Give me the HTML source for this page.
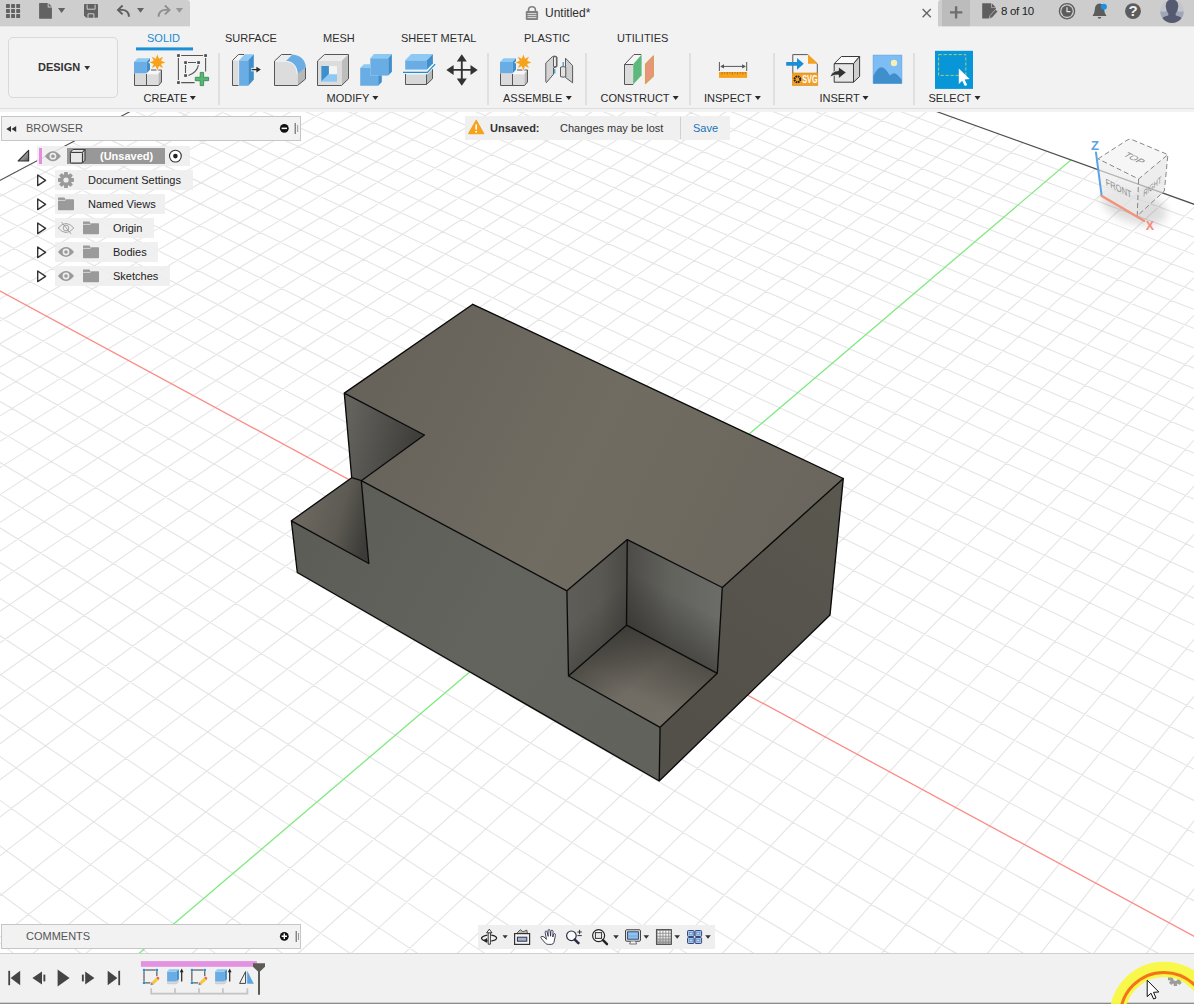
<!DOCTYPE html>
<html><head><meta charset="utf-8"><title>Fusion</title>
<style>
*{box-sizing:border-box;margin:0;padding:0}
html,body{width:1194px;height:1004px;overflow:hidden;background:#fff}
body{font-family:"Liberation Sans",sans-serif;font-size:11px;color:#333;position:relative}
.abs{position:absolute}
.t{position:absolute;white-space:nowrap;font-size:11px;line-height:12px;color:#2e2e2e}
.b{font-weight:bold}
#topbar{left:0;top:0;width:1194px;height:27px;background:#f2f2f2}
#qat{left:0;top:0;width:190px;height:26px;background:#cdcecd;border-top-right-radius:3px}
#rbar{left:938px;top:0;width:256px;height:26px;background:#cdcdcd;border-top-left-radius:3px}
#plusbox{left:942px;top:0;width:28px;height:26px;background:#bcbcbc}
#toolbar{left:0;top:26px;width:1194px;height:86px;background:#f2f2f2}
#tbline{left:0;top:108px;width:1194px;height:1px;background:#dedede}
#design{left:8px;top:37px;width:110px;height:61px;border:1px solid #d8d8d8;border-radius:5px;background:#f3f3f3}
.sep{position:absolute;top:53px;width:2px;height:52px;background:#dfdfdf}
.tab{position:absolute;top:32px;font-size:11px;line-height:12px;color:#2e2e2e;white-space:nowrap}
.lbl{position:absolute;top:92px;font-size:11px;line-height:12px;color:#2a2a2a;white-space:nowrap}
.panel{position:absolute;background:#f2f2f2;border:1px solid #c6c6c6}
.row{position:absolute;height:20px;background:rgba(238,238,238,0.88)}
#timeline{left:0;top:953px;width:1194px;height:51px;background:#f1f1f1;border-top:1px solid #cfcfcf;border-bottom:1px solid #8c8c8c;box-shadow:inset 0 -1px 0 #d0d0d0}
#navbar{left:478px;top:925px;width:237px;height:24px;background:#efefef}
#notice{left:465px;top:116px;width:265px;height:24px;background:#f0f0f0}
</style></head><body>
<svg id="cv" width="1194" height="1004" viewBox="0 0 1194 1004" style="position:absolute;left:0;top:0">
<defs>
<linearGradient id="gTop" gradientUnits="userSpaceOnUse" x1="360" y1="360" x2="800" y2="580"><stop offset="0" stop-color="#66625a"/><stop offset="0.5" stop-color="#706c62"/><stop offset="1" stop-color="#6a665d"/></linearGradient>
<linearGradient id="gFront" gradientUnits="userSpaceOnUse" x1="300" y1="540" x2="660" y2="740"><stop offset="0" stop-color="#5d5d57"/><stop offset="0.5" stop-color="#64645f"/><stop offset="1" stop-color="#62625d"/></linearGradient>
<linearGradient id="gRight" gradientUnits="userSpaceOnUse" x1="690" y1="720" x2="840" y2="500"><stop offset="0" stop-color="#53504a"/><stop offset="1" stop-color="#5a574f"/></linearGradient>
<linearGradient id="gLW" gradientUnits="userSpaceOnUse" x1="346" y1="430" x2="415" y2="445"><stop offset="0" stop-color="#63625d"/><stop offset="1" stop-color="#3f3e3a"/></linearGradient>
<linearGradient id="gStep" gradientUnits="userSpaceOnUse" x1="300" y1="515" x2="368" y2="535"><stop offset="0" stop-color="#6c6860"/><stop offset="0.55" stop-color="#5d5a53"/><stop offset="1" stop-color="#3c3b37"/></linearGradient>
<linearGradient id="gNL" gradientUnits="userSpaceOnUse" x1="567" y1="630" x2="628" y2="630"><stop offset="0" stop-color="#5f5d57"/><stop offset="0.55" stop-color="#5a5852"/><stop offset="1" stop-color="#4a4945"/></linearGradient>
<linearGradient id="oNLb" gradientUnits="userSpaceOnUse" x1="626.5" y1="625.2" x2="603.4" y2="598.9"><stop offset="0" stop-color="#2a2926" stop-opacity="0.32"/><stop offset="1" stop-color="#2a2926" stop-opacity="0"/></linearGradient>
<linearGradient id="gNB" gradientUnits="userSpaceOnUse" x1="627" y1="600" x2="722" y2="600"><stop offset="0" stop-color="#4c4b47"/><stop offset="0.45" stop-color="#62625d"/><stop offset="1" stop-color="#6c6c68"/></linearGradient>
<linearGradient id="oNBb" gradientUnits="userSpaceOnUse" x1="626.5" y1="625.2" x2="650" y2="581"><stop offset="0" stop-color="#2a2926" stop-opacity="0.5"/><stop offset="1" stop-color="#2a2926" stop-opacity="0"/></linearGradient>
<linearGradient id="gNF" gradientUnits="userSpaceOnUse" x1="640" y1="625" x2="655" y2="725"><stop offset="0" stop-color="#6a665e"/><stop offset="1" stop-color="#736f66"/></linearGradient>
<linearGradient id="oNF1" gradientUnits="userSpaceOnUse" x1="626.5" y1="625.2" x2="600" y2="675.3"><stop offset="0" stop-color="#2a2926" stop-opacity="0.45"/><stop offset="1" stop-color="#2a2926" stop-opacity="0"/></linearGradient>
<linearGradient id="oNF2" gradientUnits="userSpaceOnUse" x1="626.5" y1="625.2" x2="659.5" y2="662.8"><stop offset="0" stop-color="#2a2926" stop-opacity="0.45"/><stop offset="1" stop-color="#2a2926" stop-opacity="0"/></linearGradient>
<clipPath id="gridclip"><polygon points="0,180.4 456.7,-61.2 1194,204.3 1194,1004 0,1004"/></clipPath>
</defs>
<rect width="1194" height="1004" fill="#fff"/>
<g clip-path="url(#gridclip)"><path d="M-1812 -100L-653 1100M-1775.7 -100L-581.3 1100M-1739.5 -100L-509.7 1100M-1703.2 -100L-438 1100M-1666.9 -100L-366.3 1100M-1630.6 -100L-294.7 1100M-1594.4 -100L-223 1100M-1558.1 -100L-151.3 1100M-1521.8 -100L-79.7 1100M-1485.5 -100L-8 1100M-1449.3 -100L63.7 1100M-1413 -100L135.3 1100M-1376.7 -100L207 1100M-1340.4 -100L278.7 1100M-1304.2 -100L350.3 1100M-1267.9 -100L422 1100M-1231.6 -100L493.6 1100M-1195.3 -100L565.3 1100M-1159.1 -100L637 1100M-1122.8 -100L708.6 1100M-1086.5 -100L780.3 1100M-1050.2 -100L852 1100M-1014 -100L923.6 1100M-977.7 -100L995.3 1100M-941.4 -100L1067 1100M-905.1 -100L1138.6 1100M-868.9 -100L1210.3 1100M-832.6 -100L1282 1100M-796.3 -100L1353.6 1100M-760 -100L1425.3 1100M-687.5 -100L1568.6 1100M-651.2 -100L1640.3 1100M-614.9 -100L1712 1100M-578.7 -100L1783.6 1100M-542.4 -100L1855.3 1100M-506.1 -100L1927 1100M-469.8 -100L1998.6 1100M-433.6 -100L2070.3 1100M-397.3 -100L2141.9 1100M-361 -100L2213.6 1100M-324.7 -100L2285.3 1100M-288.5 -100L2356.9 1100M-252.2 -100L2428.6 1100M-215.9 -100L2500.3 1100M-179.6 -100L2571.9 1100M-143.4 -100L2643.6 1100M-107.1 -100L2715.3 1100M-70.8 -100L2786.9 1100M-34.5 -100L2858.6 1100M1.7 -100L2930.3 1100M38 -100L3001.9 1100M74.3 -100L3073.6 1100M110.6 -100L3145.3 1100M146.8 -100L3216.9 1100M183.1 -100L3288.6 1100M219.4 -100L3360.3 1100M255.7 -100L3431.9 1100M291.9 -100L3503.6 1100M328.2 -100L3575.2 1100M2233.3 -100L1659.9 1100M2204.7 -100L1603.5 1100M2176.2 -100L1547 1100M2147.6 -100L1490.6 1100M2119 -100L1434.2 1100M2090.5 -100L1377.7 1100M2061.9 -100L1321.3 1100M2033.3 -100L1264.9 1100M2004.8 -100L1208.4 1100M1976.2 -100L1152 1100M1947.6 -100L1095.6 1100M1919.1 -100L1039.1 1100M1890.5 -100L982.7 1100M1861.9 -100L926.3 1100M1833.4 -100L869.8 1100M1804.8 -100L813.4 1100M1776.2 -100L757 1100M1747.7 -100L700.5 1100M1719.1 -100L644.1 1100M1690.5 -100L587.7 1100M1662 -100L531.2 1100M1633.4 -100L474.8 1100M1604.8 -100L418.4 1100M1576.3 -100L361.9 1100M1547.7 -100L305.5 1100M1519.1 -100L249.1 1100M1490.6 -100L192.6 1100M1462 -100L136.2 1100M1433.5 -100L79.7 1100M1404.9 -100L23.3 1100M1347.8 -100L-89.6 1100M1319.2 -100L-146 1100M1290.6 -100L-202.4 1100M1262.1 -100L-258.9 1100M1233.5 -100L-315.3 1100M1204.9 -100L-371.7 1100M1176.4 -100L-428.2 1100M1147.8 -100L-484.6 1100M1119.2 -100L-541 1100M1090.7 -100L-597.5 1100M1062.1 -100L-653.9 1100M1033.5 -100L-710.3 1100M1005 -100L-766.8 1100M976.4 -100L-823.2 1100M947.8 -100L-879.6 1100M919.3 -100L-936.1 1100M890.7 -100L-992.5 1100M862.1 -100L-1048.9 1100M833.6 -100L-1105.4 1100M805 -100L-1161.8 1100M776.4 -100L-1218.2 1100M747.9 -100L-1274.7 1100M719.3 -100L-1331.1 1100M690.7 -100L-1387.5 1100M662.2 -100L-1444 1100M633.6 -100L-1500.4 1100M605.1 -100L-1556.9 1100M576.5 -100L-1613.3 1100M547.9 -100L-1669.7 1100" stroke="#000" stroke-opacity="0.1" stroke-width="1.15" fill="none"/><line x1="-723.8" y1="-100" x2="1497" y2="1100" stroke="#fb8c86" stroke-width="1.3" /><line x1="1376.3" y1="-100" x2="-33.1" y2="1100" stroke="#80e980" stroke-width="1.3" /></g>
<line x1="456.7" y1="-61.4" x2="1400" y2="278.5" stroke="#505050" stroke-width="1.25" /><line x1="456.7" y1="-61.4" x2="-100" y2="233.3" stroke="#505050" stroke-width="1.25" />
<g><polygon points="472.8,304.3 843.3,478.5 722.3,587.5 627.3,539.6 566.9,590.8 361.3,480.7 424.4,435 344.3,393.1" fill="url(#gTop)" />
<polygon points="344.3,393.1 424.4,435 361.3,480.7 351.7,477.7" fill="url(#gLW)" />
<polygon points="291.4,520.8 351.7,477.7 361.3,480.7 368.8,563.5" fill="url(#gStep)" />
<polygon points="291.4,520.8 368.8,563.5 361.3,480.7 566.9,590.8 568.5,676 660.1,727.3 659.2,781 297.3,572.5" fill="url(#gFront)" />
<polygon points="566.9,590.8 627.3,539.6 626.5,625.2 568.5,676" fill="url(#gNL)" />
<polygon points="566.9,590.8 627.3,539.6 626.5,625.2 568.5,676" fill="url(#oNLb)" />
<polygon points="627.3,539.6 722.3,587.5 717.3,673.3 626.5,625.2" fill="url(#gNB)" />
<polygon points="627.3,539.6 722.3,587.5 717.3,673.3 626.5,625.2" fill="url(#oNBb)" />
<polygon points="626.5,625.2 717.3,673.3 660.1,727.3 568.5,676" fill="url(#gNF)" />
<polygon points="626.5,625.2 717.3,673.3 660.1,727.3 568.5,676" fill="url(#oNF1)" />
<polygon points="626.5,625.2 717.3,673.3 660.1,727.3 568.5,676" fill="url(#oNF2)" />
<polygon points="722.3,587.5 843.3,478.5 830,615 659.2,781 660.1,727.3 717.3,673.3" fill="url(#gRight)" />
<path d="M472.8 304.3L843.3 478.5M472.8 304.3L344.3 393.1M344.3 393.1L424.4 435M424.4 435L361.3 480.7M361.3 480.7L566.9 590.8M566.9 590.8L627.3 539.6M627.3 539.6L722.3 587.5M722.3 587.5L843.3 478.5M843.3 478.5L830 615M830 615L659.2 781M659.2 781L297.3 572.5M297.3 572.5L291.4 520.8M291.4 520.8L368.8 563.5M291.4 520.8L351.7 477.7M344.3 393.1L351.7 477.7M361.3 480.7L368.8 563.5M566.9 590.8L568.5 676M627.3 539.6L626.5 625.2M722.3 587.5L717.3 673.3M626.5 625.2L568.5 676M626.5 625.2L717.3 673.3M568.5 676L660.1 727.3M717.3 673.3L660.1 727.3M660.1 727.3L659.2 781M351.7 477.7L361.3 480.7" stroke="#0a0a0a" stroke-width="1.35" stroke-linecap="round" fill="none"/></g>
<defs>
<filter id="blur4" x="-50%" y="-50%" width="200%" height="200%"><feGaussianBlur stdDeviation="4"/></filter>
</defs>
<g id="viewcube">
 <ellipse cx="1134" cy="206" rx="34" ry="17" fill="#000" opacity="0.13" filter="url(#blur4)" transform="rotate(18 1134 206)"/>
 <polygon points="1098.1,158.8 1129.5,138.6 1167.9,154.6 1138.6,179" fill="#f1f1f1" fill-opacity="0.66"/>
 <polygon points="1098.1,158.8 1138.6,179 1137.2,216 1101.6,195.1" fill="#ebebeb" fill-opacity="0.66"/>
 <polygon points="1138.6,179 1167.9,154.6 1164.4,190.9 1137.2,216" fill="#e3e3e3" fill-opacity="0.66"/>
 <path d="M1098.1 158.8 L1127 140.2 Q1129.5 138.6 1132 139.6 L1167.9 154.6 L1138.6 179 Z M1138.6 179 L1137.2 216 L1164.4 190.9 L1167.9 154.6" fill="none" stroke="#7a7a7a" stroke-width="0.9" stroke-dasharray="5 3"/>
 <text transform="matrix(0.894,0.446,-0.842,0.541,1134.4,158.1)" font-family="Liberation Sans, sans-serif" font-size="9.5" fill="#8a8a8a" text-anchor="middle" y="3.4" textLength="20" lengthAdjust="spacingAndGlyphs">TOP</text>
 <text transform="matrix(0.894,0.446,0.096,0.995,1118.6,188.2)" font-family="Liberation Sans, sans-serif" font-size="10" fill="#8a8a8a" text-anchor="middle" y="3.6" textLength="29" lengthAdjust="spacingAndGlyphs">FRONT</text>
 <text transform="matrix(0.769,-0.640,-0.038,0.999,1152.3,186.4)" font-family="Liberation Sans, sans-serif" font-size="9.5" fill="#8a8a8a" text-anchor="middle" y="3.4" textLength="23.5" lengthAdjust="spacingAndGlyphs">RIGHT</text>
 <path d="M1096 152.6 L1101.6 195.4" stroke="#5aa3e4" stroke-width="2" stroke-linecap="round"/>
 <path d="M1101.8 196 L1144 220.8" stroke="#f3927a" stroke-width="2.4" stroke-linecap="round"/>
 <text x="1094.9" y="150.4" font-family="Liberation Sans, sans-serif" font-size="13" font-weight="bold" fill="#5aa3e4" text-anchor="middle">Z</text>
 <text x="1149.8" y="229.6" font-family="Liberation Sans, sans-serif" font-size="12.5" font-weight="bold" fill="#f58a7c" text-anchor="middle">X</text>
</g>

</svg>

<div class="abs" id="topbar"></div>
<div class="abs" id="qat"></div>
<div class="abs" id="rbar"></div>
<div class="abs" id="plusbox"></div>
<div class="abs" id="toolbar"></div>
<div class="abs" id="tbline"></div>
<div class="abs" id="design"></div>
<div class="abs" style="left:0;top:26px;width:190px;height:1px;background:#e4e5e4"></div>
<div class="abs" style="left:938px;top:26px;width:256px;height:1px;background:#e4e4e4"></div>
<div class="abs" style="left:942px;top:26px;width:28px;height:1px;background:#dedede"></div>

<div class="sep" style="left:218px"></div>
<div class="sep" style="left:487px"></div>
<div class="sep" style="left:585px"></div>
<div class="sep" style="left:689px"></div>
<div class="sep" style="left:773px"></div>
<div class="sep" style="left:913px"></div>

<div class="t b" style="left:38px;top:61px;color:#333">DESIGN</div>
<div class="t" style="left:545px;top:7px;font-size:12px;line-height:13px;color:#2e2e2e">Untitled*</div>
<div class="t" style="left:1001px;top:4.5px;font-size:11.5px;line-height:13px;color:#222;letter-spacing:-0.35px">8 of 10</div>

<div class="tab" style="left:147px;color:#1a8ad2">SOLID</div>
<div class="abs" style="left:135.5px;top:47px;width:57.5px;height:1px;background:#70b7e2"></div><div class="abs" style="left:135.5px;top:48px;width:57.5px;height:2px;background:#1a8fd8"></div><div class="abs" style="left:135.5px;top:50px;width:57.5px;height:1px;background:#9ccae8"></div>
<div class="tab" style="left:225px">SURFACE</div>
<div class="tab" style="left:323px">MESH</div>
<div class="tab" style="left:401px">SHEET METAL</div>
<div class="tab" style="left:524px">PLASTIC</div>
<div class="tab" style="left:617px">UTILITIES</div>

<div class="lbl" style="left:143.5px">CREATE</div>
<div class="lbl" style="left:326.5px">MODIFY</div>
<div class="lbl" style="left:503px">ASSEMBLE</div>
<div class="lbl" style="left:600.5px">CONSTRUCT</div>
<div class="lbl" style="left:704px">INSPECT</div>
<div class="lbl" style="left:819.5px">INSERT</div>
<div class="lbl" style="left:928.5px">SELECT</div>

<svg class="abs" style="left:0;top:0" width="1194" height="112" viewBox="0 0 1194 112">
<defs>
<g id="icNewComp">
 <polygon points="0,8 12.5,8 12.5,19.5 0,19.5" fill="#6aade4"/>
 <polygon points="0,8 3.6,4.2 16,4.2 12.5,8" fill="#8ec9f3"/>
 <polygon points="12.5,8 16,4.2 16,16 12.5,19.5" fill="#3f8fcc"/>
 <rect x="0.5" y="19.5" width="12" height="12" fill="#dadada"/>
 <rect x="12.5" y="19.5" width="12" height="12" fill="#dcdcdc"/>
 <polygon points="12.5,19.5 16,16 27.5,16 24.5,19.5" fill="#f6f6f6"/>
 <polygon points="24.5,19.5 27.5,16 27.5,28 24.5,31.5" fill="#b8b8b8"/>
 <path d="M12.5 19.8 H24.5" stroke="#fff" stroke-width="0.8" fill="none"/><path d="M0.5 19.5 V31.5 H24.5 L27.5 28 V16 H17 M12.5 20 V31.5" fill="none" stroke="#565656" stroke-width="1" stroke-linejoin="round"/>
 <path d="M23.4 0.4 L25 4.8 L29 2.8 L27 6.8 L31.4 8.4 L27 10 L29 14 L25 12 L23.4 16.4 L21.8 12 L17.8 14 L19.8 10 L15.4 8.4 L19.8 6.8 L17.8 2.8 L21.8 4.8 Z" fill="#f6a21d" stroke="#f4f1ea" stroke-width="1.6" stroke-linejoin="round" paint-order="stroke"/>
</g>
<path id="dd" d="M0 0 H6.2 L3.1 4 Z"/>
</defs>

<!-- quick access -->
<g fill="#626262">
 <g>
  <rect x="6" y="4" width="3.9" height="3.9" rx="0.6"/><rect x="11.1" y="4" width="3.9" height="3.9" rx="0.6"/><rect x="16.2" y="4" width="3.9" height="3.9" rx="0.6"/>
  <rect x="6" y="9.05" width="3.9" height="3.9" rx="0.6"/><rect x="11.1" y="9.05" width="3.9" height="3.9" rx="0.6"/><rect x="16.2" y="9.05" width="3.9" height="3.9" rx="0.6"/>
  <rect x="6" y="14.1" width="3.9" height="3.9" rx="0.6"/><rect x="11.1" y="14.1" width="3.9" height="3.9" rx="0.6"/><rect x="16.2" y="14.1" width="3.9" height="3.9" rx="0.6"/>
 </g>
 <path d="M39.6 3.1 H47.7 V7.4 H51.9 V18.3 Q51.9 18.8 51.4 18.8 H39.6 Q39.1 18.8 39.1 18.3 V3.6 Q39.1 3.1 39.6 3.1 Z"/>
 <path d="M48.6 3.3 L51.7 6.5 H48.6 Z"/>
 <path d="M58 8 H65.2 L61.6 12.9 Z"/>
 <path d="M85 4 H97 Q98 4 98 5 V16.8 Q98 17.8 97 17.8 H86.2 L84 15.6 V5 Q84 4 85 4 Z"/>
 <path d="M137 8 H144 L140.5 12.8 Z"/>
</g>
<path d="M87.1 4.6 V9.2 H95.1 V4.6" fill="none" stroke="#cdcecd" stroke-width="1"/>
<path d="M88 18 V13.8 H93.9 V18" fill="none" stroke="#cdcecd" stroke-width="1"/>
<g fill="none" stroke="#5e5e5e" stroke-width="1.9" stroke-linejoin="miter">
 <path d="M122.6 5.5 L118 9.9 L122.6 14.4"/>
 <path d="M118.4 9.9 H122.5 Q128.8 10.3 128.9 16.7"/>
</g>
<g fill="none" stroke="#8f8f8f" stroke-width="1.9">
 <path d="M164.9 5.5 L169.5 9.9 L164.9 14.4"/>
 <path d="M169.1 9.9 H165 Q158.7 10.3 158.6 16.7"/>
</g>
<path d="M175.8 8 H183 L179.4 12.8 Z" fill="#959595"/>

<!-- title lock -->
<g>
 <path d="M528.5 11.5 V9.8 Q528.5 6.8 531.9 6.8 Q535.4 6.8 535.4 9.8 V11.5" fill="none" stroke="#808080" stroke-width="1.6"/>
 <rect x="525.8" y="11.1" width="12.3" height="8.8" rx="0.8" fill="#808080"/>
 <path d="M527.5 13.6 H536.4 M527.5 15.6 H536.4 M527.5 17.6 H536.4" stroke="#e8e8e8" stroke-width="0.9"/>
</g>
<!-- close X -->
<path d="M922.6 9 L930.8 17.2 M930.8 9 L922.6 17.2" stroke="#666" stroke-width="1.4"/>
<!-- plus -->
<path d="M950 12.4 H962.3 M956.1 6.2 V18.6" stroke="#6e6e6e" stroke-width="2.4"/>
<!-- job status doc icon -->
<g>
 <path d="M982.2 3.2 H991 L996 8.2 V10 L989 18.5 H982.2 Z" fill="#5e5e5e"/>
 <path d="M991.4 3.2 L996 7.8 H991.4 Z" fill="#cdcdcd"/>
 <path d="M992 3.6 L995.6 7.2 H992 Z" fill="#5e5e5e"/>
 <path d="M989.2 18.9 L990 15.6 L995.6 9.4 L997.8 11.4 L992.3 17.6 Z" fill="#5e5e5e" stroke="#cdcdcd" stroke-width="0.7"/>
</g>
<!-- clock -->
<circle cx="1067" cy="11.2" r="7.6" fill="none" stroke="#5c5c5c" stroke-width="1.3"/>
<circle cx="1067" cy="11.2" r="5.6" fill="#5c5c5c"/>
<path d="M1067 7.3 V11.6 H1070.4" fill="none" stroke="#e4e4e4" stroke-width="1.2"/>
<!-- bell -->
<path d="M1099.5 3.6 Q1104 4.2 1104.2 9.5 Q1104.3 13.4 1106.2 15.2 V16 H1092.8 V15.2 Q1094.7 13.4 1094.8 9.5 Q1095 4.2 1099.5 3.6 Z" fill="#5c5c5c"/>
<path d="M1097.6 17 H1101.4 Q1101 18.8 1099.5 18.8 Q1098 18.8 1097.6 17 Z" fill="#5c5c5c"/>
<circle cx="1103.9" cy="6.8" r="3" fill="#1992e6"/>
<!-- help -->
<circle cx="1133" cy="11.2" r="7.9" fill="#5c5c5c"/>
<text x="1133" y="16.4" font-family="Liberation Sans, sans-serif" font-weight="bold" font-size="15" fill="#f0f0f0" text-anchor="middle">?</text>
<!-- avatar -->
<clipPath id="avc"><circle cx="1172" cy="11.2" r="11.8"/></clipPath>
<g clip-path="url(#avc)">
 <rect x="1160" y="-1" width="24" height="12.5" fill="#c3c5cb"/>
 <rect x="1160" y="11.5" width="24" height="12" fill="#a0a5b7"/>
 <g fill="#555a71">
  <path d="M1172 -0.6 Q1178.6 -0.4 1178.2 7 Q1177.8 11.6 1175.6 13.6 L1175.8 15.4 Q1181.4 16.6 1182.6 19.4 V24 H1161.4 V19.4 Q1162.6 16.6 1168.2 15.4 L1168.4 13.6 Q1166.2 11.6 1165.8 7 Q1165.4 -0.4 1172 -0.6 Z"/>
 </g>
</g>
<!-- DESIGN dropdown arrow -->
<path d="M84.3 66 H90 L87.15 70 Z" fill="#333"/>

<!-- CREATE icons -->
<use href="#icNewComp" x="134" y="54"/>
<g>
 <g fill="none" stroke="#555" stroke-width="1.1">
  <path d="M181.2 55.5 H203 M178.4 58 V80 M205.6 58 V71.5 M181.2 82.6 H194.6"/>
  <path d="M188 62.5 H196 M185.5 65 V73 M198.4 65.2 Q197 72.5 188.4 75.6"/>
 </g>
 <g fill="#4a4a4a">
  <rect x="177.1" y="54.2" width="2.7" height="2.7"/><rect x="204.2" y="54.2" width="2.7" height="2.7"/><rect x="177.1" y="81.2" width="2.7" height="2.7"/>
  <rect x="184.2" y="61.2" width="2.7" height="2.7"/><rect x="197.2" y="61.2" width="2.7" height="2.7"/><rect x="184.2" y="74.2" width="2.7" height="2.7"/>
 </g>
 <path d="M200.2 72.4 H203.6 V77.3 H208.6 V80.7 H203.6 V85.6 H200.2 V80.7 H195.3 V77.3 H200.2 Z" fill="#55b774" stroke="#3b8a55" stroke-width="0.9"/>
</g>
<path d="M189.8 96 H195.8 L192.8 100 Z" fill="#2a2a2a"/>

<!-- MODIFY icons -->
<!-- press pull -->
<g>
 <polygon points="232.5,60.5 238.4,54.5 244.5,54.5 238.5,60.5" fill="#f6f6f6"/>
 <rect x="232.5" y="60.5" width="6" height="25" fill="#dcdcdc"/>
 <path d="M238.5 85.5 H232.5 V60.5 L238.4 54.5 H244" fill="none" stroke="#565656" stroke-width="1" stroke-linejoin="round"/>
 <polygon points="239.1,60.3 248.3,60.3 248.3,85.8 239.1,85.8" fill="#6aade4"/>
 <polygon points="239.1,60.3 244.7,54.2 253.8,54.2 248.3,60.3" fill="#8ec9f3"/>
 <polygon points="248.3,60.3 253.8,54.2 253.8,79.6 248.3,85.8" fill="#3f8fcc"/>
 <path d="M251.2 69.6 H258" stroke="#f2f2f2" stroke-width="3.4"/>
 <path d="M251.6 69.6 H257.5" stroke="#2a2a2a" stroke-width="1.3"/>
 <path d="M256.4 66.8 L260.8 69.6 L256.4 72.4 Z" fill="#2a2a2a"/>
</g>
<!-- fillet -->
<g>
 <polygon points="274.5,61 281.5,54.5 292,54.5 285,61" fill="#ececec"/>
 <polygon points="297.5,74 305.5,67.5 305.5,79 297.5,85.5" fill="#b8b8b8"/>
 <path d="M274.5 61 H286 Q296.6 61.5 297.5 74 V85.5 H274.5 Z" fill="#dcdcdc"/>
 <path d="M286 61 L292.4 54.4 Q304.5 55.5 306 67.2 L297.8 74 Q296.8 61.5 286 61 Z" fill="#6aade4"/>
 <path d="M275 61.3 H286 Q296.4 62 297.2 74" fill="none" stroke="#f8f8f8" stroke-width="0.8"/><path d="M291.6 54.5 H281.5 L274.5 61 V85.5 H297.5 L305.5 79 V67.8" fill="none" stroke="#565656" stroke-width="1" stroke-linejoin="round"/>
</g>
<!-- shell -->
<g>
 <polygon points="317.5,61 324.5,54.5 348.5,54.5 341.5,61" fill="#ededed"/>
 <polygon points="341.5,61 348.5,54.5 348.5,78.8 341.5,85.5" fill="#bdbdbd"/>
 <rect x="317.5" y="61" width="24" height="24.5" fill="#dcdcdc"/>
 <path d="M317.5 61 L324.5 54.5 H348.5 V78.8 L341.5 85.5 H317.5 Z" fill="none" stroke="#565656" stroke-width="1" stroke-linejoin="round"/>
 <rect x="321.3" y="66.1" width="15.7" height="15.7" fill="#f4f4f4"/>
 <polygon points="321.3,66.1 328.9,66.1 328.9,74.2 321.3,81.8" fill="#3f8fcc"/>
 <polygon points="328.9,74.2 337,74.2 337,81.8 321.3,81.8" fill="#8ec9f3"/>
</g>
<!-- combine -->
<g>
 <polygon points="370.3,58.2 388.3,58.2 388.3,75.6 370.3,75.6" fill="#6aade4"/>
 <polygon points="370.3,58.2 374,54.1 391.9,54.1 388.3,58.2" fill="#8ec9f3"/>
 <polygon points="388.3,58.2 391.9,54.1 391.9,71.8 388.3,75.6" fill="#3f8fcc"/>
 <polygon points="360.2,68 363.8,64.2 370.3,64.2 370.3,68" fill="#8ec9f3"/>
 <polygon points="360.2,68 370.3,68 370.3,75.6 378.2,75.6 378.2,85.7 360.2,85.7" fill="#6aade4"/>
 <polygon points="378.2,75.6 381.8,75.6 381.8,82.1 378.2,85.7" fill="#3f8fcc"/>
</g>
<!-- offset face -->
<g>
 <polygon points="405.2,60.3 426.9,60.3 426.9,69.6 405.2,69.6" fill="#6aade4"/>
 <polygon points="405.2,60.3 411.2,54.1 432.9,54.1 426.9,60.3" fill="#8ec9f3"/>
 <polygon points="426.9,60.3 432.9,54.1 432.9,63.6 426.9,69.6" fill="#3f8fcc"/>
 <polygon points="405.5,74.5 426.5,74.5 426.5,84.5 405.5,84.5" fill="#d8d8d8"/>
 <polygon points="426.5,74.5 432.5,68.5 432.5,78.8 426.5,84.5" fill="#b8b8b8"/>
 <path d="M405.5 74 V84.5 H426.5 L432.5 78.8 V69 M426.5 84.5 V74.5" fill="none" stroke="#565656" stroke-width="1" stroke-linejoin="round"/>
 <path d="M403 72.3 H427.5 L435.1 64.2" fill="none" stroke="#f2f2f2" stroke-width="3"/>
 <path d="M403 72.3 H427.5 L435.1 64.2" fill="none" stroke="#1a8fd8" stroke-width="1.2"/>
</g>
<!-- move -->
<g fill="#333">
 <path d="M461.8 59 V81 M451 69.9 H473" stroke="#333" stroke-width="1.9"/>
 <path d="M461.8 54.2 L466.8 61.4 H456.8 Z"/>
 <path d="M461.8 85.8 L466.8 78.6 H456.8 Z"/>
 <path d="M446.4 69.9 L453.6 64.9 V74.9 Z"/>
 <path d="M477.7 69.9 L470.5 64.9 V74.9 Z"/>
</g>
<path d="M372.4 96 H378.4 L375.4 100 Z" fill="#2a2a2a"/>

<!-- ASSEMBLE -->
<use href="#icNewComp" x="500" y="54"/>
<g stroke="#5a5a5a" stroke-width="1" stroke-linejoin="round">
 <path d="M545.8 63 L552.5 56.5 Q555 55.4 557 57 V66.5 Q556 67.6 553.5 67.8 V74.2 L546.5 82.5 Q545.8 82.5 545.8 81.5 Z" fill="#d4d4d4"/>
 <path d="M553.5 57 Q555 56.2 556.4 57.2 V66.2 Q555 67 553.5 66.6 Z" fill="#f0f0f0"/>
 <path d="M565.5 58.2 L572.6 65.6 V82.8 L565.5 77.5 Z" fill="#cfcfcf"/>
 <path d="M560.5 67.2 Q563 66 565.8 67.2 V76.6 Q563 77.8 560.5 76.6 Z" fill="#e2e2e2"/>
</g>
<path d="M554.8 69 V73.4 M563.2 62 V66.4" stroke="#1a8fd8" stroke-width="1.1"/>
<path d="M565.8 96 H571.8 L568.8 100 Z" fill="#2a2a2a"/>

<!-- CONSTRUCT -->
<g>
 <polygon points="624.5,64.5 634,54.5 641.6,54.5 633.2,64.5" fill="#f6f6f6"/>
 <rect x="624.5" y="64.5" width="8.7" height="20" fill="#dcdcdc"/>
 <polygon points="633.2,64.2 641.6,54.6 641.6,75.2 633.2,84.6" fill="#5cb97b"/>
 <path d="M633.2 84.5 H624.5 V64.5 L634 54.5 H641.2 M624.5 64.5 H633" fill="none" stroke="#565656" stroke-width="1" stroke-linejoin="round"/>
 <polygon points="645.5,64.2 653.4,55.8 653.4,76 645.5,83.6" fill="#e8957b" stroke="#d6a052" stroke-width="1.1" stroke-linejoin="round"/>
</g>
<path d="M672.7 96 H678.7 L675.7 100 Z" fill="#2a2a2a"/>

<!-- INSPECT -->
<g>
 <path d="M719.4 62 V71 M746.7 62 V71 M721 66.4 H745" stroke="#555" stroke-width="1" fill="none"/>
 <path d="M720.2 66.4 L724 64.2 V68.6 Z M745.9 66.4 L742.1 64.2 V68.6 Z" fill="#555"/>
 <rect x="719" y="72" width="28.1" height="5.9" fill="#f6a21d"/>
 <path d="M722 72 V74.4 M724.6 72 V73.6 M727.2 72 V74.4 M729.8 72 V73.6 M732.4 72 V74.4 M735 72 V73.6 M737.6 72 V74.4 M740.2 72 V73.6 M742.8 72 V74.4 M745.4 72 V73.6" stroke="#a86a10" stroke-width="0.8"/>
</g>
<path d="M754.9 96 H760.9 L757.9 100 Z" fill="#2a2a2a"/>

<!-- INSERT -->
<g>
 <path d="M792.8 54.6 H807.5 L817.3 64 V73.5 H792.8 Z" fill="#f4f4f4" stroke="#585858" stroke-width="1"/>
 <path d="M808 54.3 L817.8 63.8 H808 Z" fill="#f6a21d"/>
 <rect x="792.3" y="73" width="25.5" height="12.5" fill="#f0a02a" stroke="#d98a18" stroke-width="0.6"/>
 <path d="M786.2 61.9 H797 V58 L803.8 63.8 L797 69.7 V65.7 H786.2 Z" fill="#1a8fd8"/>
 <circle cx="797.4" cy="79.3" r="2.9" fill="none" stroke="#1a1a1a" stroke-width="1.9" stroke-dasharray="1.55 0.73"/>
 <text x="802.3" y="83.4" font-family="Liberation Sans, sans-serif" font-weight="bold" font-size="10.6" fill="#fff" textLength="15.2" lengthAdjust="spacingAndGlyphs">SVG</text>
</g>
<g>
 <polygon points="834.2,63.7 841.4,56.5 859.6,56.5 853.5,63.7" fill="#fafafa" stroke="#3a3a3a" stroke-linejoin="round"/>
 <polygon points="853.5,63.7 859.6,56.5 859.6,76.5 853.5,82.2" fill="#cfcfcf" stroke="#3a3a3a" stroke-linejoin="round"/>
 <polygon points="834.2,63.7 853.5,63.7 853.5,82.2 834.2,82.2" fill="#e6e6e6" stroke="#3a3a3a"/>
 <path d="M830 77.2 Q831.6 71 838.4 70.6 V66.8 L846.3 72.4 L838.4 78.8 V75 Q834 74.6 830 77.2 Z" fill="#333" stroke="#f2f2f2" stroke-width="0.8"/>
</g>
<g>
 <rect x="873.1" y="55.1" width="28.8" height="28.5" fill="#7dbdf3" stroke="#5da4e0" stroke-width="0.6"/>
 <path d="M873.3 76 Q877.5 67 881.6 67.2 Q885.5 67.6 889.8 75.6 Q893 72.6 895.2 73.4 Q897.5 74 901.7 79.8 V83.4 H873.3 Z" fill="#3f8fcc"/>
 <circle cx="894" cy="63" r="3.2" fill="#f6f0b4"/>
</g>
<path d="M862.5 96 H868.5 L865.5 100 Z" fill="#2a2a2a"/>

<!-- SELECT -->
<g>
 <rect x="935" y="50.8" width="38" height="38.1" fill="#0896d8"/>
 <rect x="938.6" y="54.6" width="27.2" height="20.8" fill="none" stroke="#9fd07a" stroke-width="1" stroke-dasharray="3.2 1.8"/>
 <path d="M958.8 68.6 L969.6 79 L964.6 79.6 L967.2 85 L964.8 86 L962.2 80.8 L958.8 84 Z" fill="#fff"/>
</g>
<path d="M974.5 96 H980.5 L977.5 100 Z" fill="#2a2a2a"/>
</svg>


<!-- notice -->
<div class="abs" id="notice"></div>
<div class="abs" style="left:680px;top:117px;width:1px;height:22px;background:#d0d0d0"></div>
<div class="t b" style="left:490px;top:122px;color:#333">Unsaved:</div>
<div class="t" style="left:560px;top:122px;color:#333">Changes may be lost</div>
<div class="t" style="left:693px;top:122px;color:#1a73b8">Save</div>

<!-- browser -->
<div class="panel" style="left:1px;top:116px;width:300px;height:25px"></div>
<div class="t" style="left:26px;top:122px;color:#555">BROWSER</div>
<div class="row" style="left:37px;top:146px;width:153px"></div>
<div class="abs" style="left:39px;top:148px;width:3px;height:16px;background:#e58be0"></div>
<div class="abs" style="left:67px;top:148px;width:98px;height:16px;background:#989898"></div>
<div class="t b" style="left:100px;top:150px;color:#fff">(Unsaved)</div>
<div class="row" style="left:55px;top:170px;width:138px"></div>
<div class="t" style="left:88px;top:174px;color:#222">Document Settings</div>
<div class="row" style="left:55px;top:194px;width:110px"></div>
<div class="t" style="left:88px;top:198px;color:#222">Named Views</div>
<div class="row" style="left:55px;top:218px;width:99px"></div>
<div class="t" style="left:113px;top:222px;color:#222">Origin</div>
<div class="row" style="left:55px;top:242px;width:103px"></div>
<div class="t" style="left:113px;top:246px;color:#222">Bodies</div>
<div class="row" style="left:55px;top:266px;width:115px"></div>
<div class="t" style="left:113px;top:270px;color:#222">Sketches</div>

<!-- comments -->
<div class="panel" style="left:1px;top:924px;width:300px;height:25px"></div>
<div class="t" style="left:26px;top:930px;color:#555">COMMENTS</div>

<div class="abs" id="navbar"></div>
<div class="abs" id="timeline"></div>

<svg class="abs" style="left:0;top:0" width="1194" height="1004" viewBox="0 0 1194 1004">
<defs>
 <g id="eye">
  <path d="M-0.4 5 Q7.6 -4.9 15.6 5 Q7.6 14.9 -0.4 5 Z" fill="#9a9a9a"/>
  <circle cx="7.6" cy="5" r="3.4" fill="#eee"/>
  <circle cx="7.6" cy="5" r="1.8" fill="#9a9a9a"/>
 </g>
 <g id="folder">
  <path d="M0 0.6 Q0 0 0.6 0 H6.4 L7.6 1.9 H15.4 Q16 1.9 16 2.5 V12.2 Q16 12.8 15.4 12.8 H0.6 Q0 12.8 0 12.2 Z" fill="#9a9a9a"/>
  <path d="M0 3 H7.2 L7.9 1.9" fill="none" stroke="#eee" stroke-width="0.7"/>
 </g>
 <path id="exp" d="M0.7 0.8 L8.6 6.1 L0.7 11.4 Z" fill="#fff" stroke="#333" stroke-width="1.4" stroke-linejoin="round"/>
 <linearGradient id="triG" x1="0" y1="0" x2="1" y2="1"><stop offset="0" stop-color="#eee"/><stop offset="1" stop-color="#555"/></linearGradient>
 <g id="tlSketch">
  <path d="M2.2 1 H12.6 M1 2.2 V12.6 M13.9 2.2 V7.2 M2.2 13.9 H7.4" stroke="#3a3a3a" stroke-width="1" fill="none"/>
  <rect x="-0.1" y="-0.1" width="2.2" height="2.2" fill="#1a8fe6"/><rect x="12.8" y="-0.1" width="2.2" height="2.2" fill="#1a8fe6"/><rect x="-0.1" y="12.8" width="2.2" height="2.2" fill="#1a8fe6"/>
  <path d="M13.2 8.8 L15.4 11 L10.6 15.4 L8.4 13.2 Z" fill="#f7c83c"/>
  <path d="M13.2 8.8 L14.2 7.9 Q15.1 7.4 15.9 8.2 Q16.6 9 16.2 10 L15.4 11 Z" fill="#f4643c"/>
  <path d="M8.4 13.2 L10.6 15.4 L7.4 16.2 Z" fill="#888"/>
 </g>
 <g id="tlExtrude">
  <polygon points="0,2.4 9.4,2.4 9.4,12.4 0,12.4" fill="#6aade4"/>
  <polygon points="0,2.4 2.3,0 11.8,0 9.4,2.4" fill="#8ec9f3"/>
  <polygon points="9.4,2.4 11.8,0 11.8,10 9.4,12.4" fill="#3f8fcc"/>
  <path d="M0 13 H9.4 L11.8 10.6 V12.6 L9.4 15 H0 Z" fill="#cfcfcf"/>
  <path d="M14.6 1.8 V12.4" stroke="#222" stroke-width="1.2"/>
  <path d="M14.6 -0.6 L16.5 3 H12.7 Z" fill="#222"/>
 </g>
</defs>

<!-- notice warning -->
<path d="M476.2 120.6 L483.6 133.6 H468.8 Z" fill="#f6a21d" stroke="#f6a21d" stroke-width="1.4" stroke-linejoin="round"/>
<path d="M476.2 124.4 V129.6" stroke="#fff" stroke-width="1.7"/>
<circle cx="476.2" cy="131.8" r="0.95" fill="#fff"/>

<!-- browser header icons -->
<path d="M11 126 V132 L6.3 129 Z M16.2 126 V132 L11.5 129 Z" fill="#333"/>
<circle cx="284.3" cy="128.3" r="4.4" fill="#111"/>
<rect x="281.6" y="127.6" width="5.4" height="1.5" fill="#fff"/>
<path d="M295.2 123 V134" stroke="#555" stroke-width="1"/><path d="M297.7 125 V132" stroke="#999" stroke-width="1"/>

<!-- row 1 -->
<path d="M28.6 150.4 V161 H18.2 Z" fill="url(#triG)" stroke="#333" stroke-width="1.2" stroke-linejoin="round"/>
<use href="#eye" x="45.3" y="151.2"/>
<g stroke="#333" stroke-width="1" stroke-linejoin="round">
 <polygon points="70.4,152.4 72.8,149.6 85,149.6 82.4,152.4" fill="#fafafa"/>
 <polygon points="82.4,152.4 85,149.6 85,160.2 82.4,163" fill="#c8c8c8"/>
 <rect x="70.4" y="152.4" width="12" height="10.6" fill="#e8e8e8" rx="1"/>
</g>
<circle cx="175.4" cy="156.1" r="5.9" fill="#fff" stroke="#333" stroke-width="1.1"/>
<circle cx="175.4" cy="156.1" r="2.3" fill="#222"/>

<!-- rows expanders -->
<use href="#exp" x="37" y="174.2"/>
<use href="#exp" x="37" y="198.2"/>
<use href="#exp" x="37" y="222.2"/>
<use href="#exp" x="37" y="246.2"/>
<use href="#exp" x="37" y="270.2"/>

<!-- gear -->
<g transform="translate(66,180)">
 <g fill="#9a9a9a">
  <rect x="-1.9" y="-8" width="3.8" height="16" rx="0.6"/>
  <rect x="-1.9" y="-8" width="3.8" height="16" rx="0.6" transform="rotate(45)"/>
  <rect x="-1.9" y="-8" width="3.8" height="16" rx="0.6" transform="rotate(90)"/>
  <rect x="-1.9" y="-8" width="3.8" height="16" rx="0.6" transform="rotate(135)"/>
  <circle r="5.9"/>
 </g>
 <circle r="2.6" fill="#eee"/>
</g>
<use href="#folder" x="58" y="197.4"/>
<!-- hidden eye -->
<g fill="none" stroke="#9a9a9a" stroke-width="0.9">
 <path d="M58.2 228 Q66 219 73.8 228 Q66 237 58.2 228 Z"/>
 <circle cx="66" cy="228" r="2.8"/>
 <path d="M61.6 222.2 L71.2 234"/>
</g>
<use href="#folder" x="83" y="221.4"/>
<use href="#eye" x="58.4" y="247"/>
<use href="#folder" x="83" y="245.4"/>
<use href="#eye" x="58.4" y="271"/>
<use href="#folder" x="83" y="269.4"/>

<!-- comments icons -->
<circle cx="284.3" cy="936.3" r="4.4" fill="#111"/>
<path d="M281.6 936.3 H287 M284.3 933.6 V939" stroke="#fff" stroke-width="1.4"/>
<path d="M296.2 931 V942" stroke="#555" stroke-width="1"/><path d="M298.5 933 V940" stroke="#999" stroke-width="1"/>

<!-- timeline playback -->
<g fill="#444">
 <rect x="8.3" y="970.8" width="1.8" height="14.4"/><path d="M20.2 970.8 V985.2 L10.6 978 Z"/>
 <path d="M42 971.6 V984.4 L32.4 978 Z"/><rect x="43.4" y="974.6" width="1.9" height="6.8"/>
 <path d="M57.6 969.5 V986.5 L69.6 978 Z"/>
 <rect x="81.9" y="974.6" width="1.9" height="6.8"/><path d="M85.2 971.6 V984.4 L94.4 978 Z"/>
 <path d="M107.7 970.8 V985.2 L117.4 978 Z"/><rect x="118.3" y="970.8" width="1.8" height="14.4"/>
</g>
<!-- timeline features -->
<rect x="140.9" y="961.1" width="116" height="5.7" fill="#e292e0"/>
<path d="M151.2 988.2 V993.7 H247.4 V988.2 M175 988.2 V993.7 M199 988.2 V993.7 M222.9 988.2 V993.7" fill="none" stroke="#c4c4c4" stroke-width="1.7"/>
<use href="#tlSketch" x="143" y="969"/>
<use href="#tlExtrude" x="167.1" y="969.2"/>
<use href="#tlSketch" x="190.9" y="969"/>
<use href="#tlExtrude" x="215.1" y="969.2"/>
<path d="M239.6 983.4 H245.6 V971.6 Z" fill="#f4f4f4" stroke="#444" stroke-width="1"/>
<path d="M247.2 970.8 L253.8 983.8 H247.2 Z" fill="#5aa5e6"/>
<path d="M253 963.2 H265 V966.8 L260 971.6 V994.8 H258 V971.6 L253 966.8 Z" fill="#5c5c57"/>

<!-- timeline gear -->
<g transform="translate(1175.4,978.6)">
 <g fill="#9c9c9c">
  <rect x="-1.7" y="-7.4" width="3.4" height="14.8"/>
  <rect x="-1.7" y="-7.4" width="3.4" height="14.8" transform="rotate(45)"/>
  <rect x="-1.7" y="-7.4" width="3.4" height="14.8" transform="rotate(90)"/>
  <rect x="-1.7" y="-7.4" width="3.4" height="14.8" transform="rotate(135)"/>
  <circle r="5.4"/>
 </g>
 <circle r="2.3" fill="#f1f1f1"/>
</g>
<!-- cursor highlight -->
<circle cx="1164" cy="1016" r="46.6" fill="none" stroke="#f8f840" stroke-width="15.4" opacity="0.95"/>
<circle cx="1164" cy="1016" r="43.6" fill="none" stroke="#f4741a" stroke-width="3"/>
<!-- cursor -->
<path d="M1147.2 980.2 V996.6 L1151 993.2 L1153.6 999 L1156 998 L1153.5 992.3 L1158.8 992 Z" fill="#fff" stroke="#111" stroke-width="1" stroke-linejoin="round"/>

<!-- NAV BAR ICONS -->
<g fill="#333">
 <path d="M502.5 935.3 H507.7 L505.1 938.6 Z"/>
 <path d="M613.2 935.3 H618.8 L616 938.8 Z"/>
 <path d="M643.5 935.3 H649.1 L646.3 938.8 Z"/>
 <path d="M674.4 935.3 H680 L677.2 938.8 Z"/>
 <path d="M705.2 935.3 H710.8 L708 938.8 Z"/>
</g>
<!-- orbit -->
<g>
 <path d="M488.2 932.4 V944.2 H490.4 V932.4" fill="#fff" stroke="#222" stroke-width="0.9"/>
 <path d="M489.3 929.2 L492 932.8 H486.6 Z" fill="#fff" stroke="#222" stroke-width="0.9" stroke-linejoin="round"/>
 <path d="M487.4 935.2 Q481.2 936.4 481.6 938.6 Q482.2 940.6 487.6 940.9 M491.2 935.2 Q496.8 936 496.6 938.4 Q496 940.4 491.4 941" fill="none" stroke="#222" stroke-width="1.3"/>
 <path d="M483 940.4 L487.2 938 V943 Z" fill="#222"/>
</g>
<!-- look at -->
<g>
 <path d="M516.6 933.4 L520.4 929.6 L523 931.8 L526.8 930 L527.4 933.4" fill="#bbb" stroke="#444" stroke-width="0.8"/>
 <rect x="514.6" y="933.6" width="15" height="10.8" fill="#f6f6f6" stroke="#333" stroke-width="1.2"/>
 <rect x="517.4" y="937.2" width="9.4" height="4" fill="#a9b4cc" stroke="#2c3050" stroke-width="1"/>
</g>
<!-- pan hand -->
<path d="M545 937.8 Q543 935.6 541.2 936.6 Q540.4 937.4 541.6 938.8 L545.6 943.4 Q546.6 944.4 548.6 944.4 H551.4 Q553.4 944.2 554 942.2 L555.4 935.4 Q555.6 933.8 554.6 933.6 Q553.8 933.6 553.4 934.8 L552.8 937 L553 931.4 Q552.8 930.2 552 930.2 Q551 930.3 550.9 931.4 L550.6 936.2 L550 930.6 Q549.8 929.4 548.9 929.5 Q548 929.6 548 930.8 L548.2 936.4 L547 931.8 Q546.6 930.8 545.8 931 Q545 931.3 545.2 932.4 L546.4 939.4 Z" fill="#fff" stroke="#2a2d48" stroke-width="0.9" stroke-linejoin="round"/>
<!-- zoom -->
<g>
 <circle cx="571.4" cy="935.8" r="4.8" fill="#fafafa" stroke="#2a2d48" stroke-width="1.2"/>
 <path d="M574.8 939.6 L578.4 943.2" stroke="#2a2d48" stroke-width="2.6" stroke-linecap="round"/>
 <path d="M577.4 932 H581.8 M579.6 929.8 V934.2 M577.4 935.6 H581.8" stroke="#222" stroke-width="0.9"/>
</g>
<!-- zoom window -->
<g>
 <circle cx="598.6" cy="935.6" r="6" fill="#fafafa" stroke="#222" stroke-width="1.2"/>
 <rect x="595.4" y="932.6" width="6.2" height="5.8" fill="#e8e8e8" stroke="#333" stroke-width="1"/>
 <path d="M603 940.2 L607 944.2" stroke="#222" stroke-width="2.4" stroke-linecap="round"/>
</g>
<!-- display -->
<g>
 <rect x="625.6" y="929.8" width="14.8" height="11.4" rx="1" fill="#f4f4f4" stroke="#333" stroke-width="1"/>
 <rect x="627.6" y="931.8" width="10.8" height="7.4" fill="#8ec4ee" stroke="#2a3560" stroke-width="0.9"/>
 <path d="M627.8 936 H638.2" stroke="#6aa8dc" stroke-width="1"/>
 <path d="M630.6 941.4 L629.6 944 H636.6 L635.6 941.4" fill="#f4f4f4" stroke="#555" stroke-width="0.8"/>
</g>
<!-- grid -->
<g>
 <rect x="656.4" y="929.6" width="15" height="14.8" fill="#8c8c8c" stroke="#444" stroke-width="0.9"/>
 <g fill="#fafafa">
  <rect x="657.6" y="930.8" width="2" height="2"/><rect x="660.5" y="930.8" width="2" height="2"/><rect x="663.4" y="930.8" width="2" height="2"/><rect x="666.3" y="930.8" width="2" height="2"/><rect x="669.2" y="930.8" width="1.4" height="2"/>
  <rect x="657.6" y="933.7" width="2" height="2"/><rect x="660.5" y="933.7" width="2" height="2"/><rect x="663.4" y="933.7" width="2" height="2"/><rect x="666.3" y="933.7" width="2" height="2"/><rect x="669.2" y="933.7" width="1.4" height="2"/>
 </g>
 <g fill="#e4e4e4">
  <rect x="657.6" y="936.6" width="2" height="2"/><rect x="660.5" y="936.6" width="2" height="2"/><rect x="663.4" y="936.6" width="2" height="2"/><rect x="666.3" y="936.6" width="2" height="2"/><rect x="669.2" y="936.6" width="1.4" height="2"/>
 </g>
 <g fill="#c4c4c4">
  <rect x="657.6" y="939.5" width="2" height="2"/><rect x="660.5" y="939.5" width="2" height="2"/><rect x="663.4" y="939.5" width="2" height="2"/><rect x="666.3" y="939.5" width="2" height="2"/><rect x="669.2" y="939.5" width="1.4" height="2"/>
 </g>
 <g fill="#b0b0b0">
  <rect x="657.6" y="942.4" width="2" height="1.4"/><rect x="660.5" y="942.4" width="2" height="1.4"/><rect x="663.4" y="942.4" width="2" height="1.4"/><rect x="666.3" y="942.4" width="2" height="1.4"/><rect x="669.2" y="942.4" width="1.4" height="1.4"/>
 </g>
</g>
<!-- viewports -->
<g fill="#9cc4ec" stroke="#2a3570" stroke-width="0.9">
 <rect x="687.5" y="930.5" width="6.6" height="6" rx="1"/><rect x="695" y="930.5" width="6.6" height="6" rx="1"/>
 <rect x="687.5" y="937.5" width="6.6" height="6" rx="1"/><rect x="695" y="937.5" width="6.6" height="6" rx="1"/>
</g>
<g fill="#c4def6" stroke="#5878a8" stroke-width="0.5">
 <rect x="689.3" y="932.4" width="3" height="2.2"/><rect x="696.8" y="932.4" width="3" height="2.2"/><rect x="689.3" y="939.4" width="3" height="2.2"/><rect x="696.8" y="939.4" width="3" height="2.2"/>
</g>
</svg>

</body></html>
